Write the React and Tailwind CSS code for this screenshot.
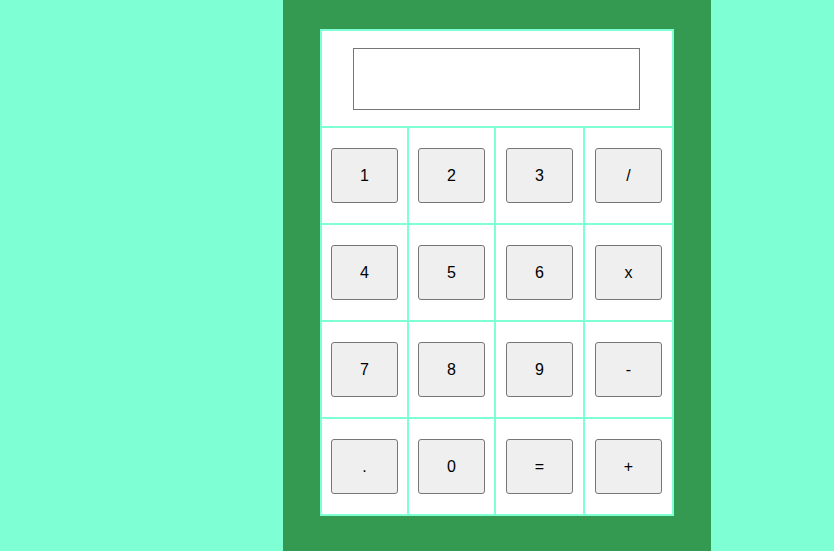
const keys = ['1', '2', '3', '/', '4', '5', '6', 'x', '7', '8', '9', '-', '.', '0', '=', '+']

export default function App() {
  return (
    <div className="min-h-screen flex bg-[#7fffd4] pl-[283px] font-['Liberation_Sans',Arial,sans-serif]">
      <div className="w-[428px] bg-[#349a52] pt-[29px] pl-[37px]">
        <div className="w-[354px] grid grid-cols-[85px_85px_87px_87px] auto-rows-[95px] gap-[2px] p-[2px] bg-[#7fffd4]">
          <div className="col-span-4 bg-white flex items-start justify-start pt-[17px] pl-[31px]">
            <input
              type="text"
              className="w-[287px] h-[62px] border border-[#767676] bg-white outline-none"
            />
          </div>
          {keys.map((k) => (
            <div key={k} className="bg-white flex items-center justify-center">
              <button className="w-[67px] h-[55px] bg-[#efefef] border border-[#767676] rounded-[3px] text-[16px] text-black">
                {k}
              </button>
            </div>
          ))}
        </div>
      </div>
    </div>
  )
}
